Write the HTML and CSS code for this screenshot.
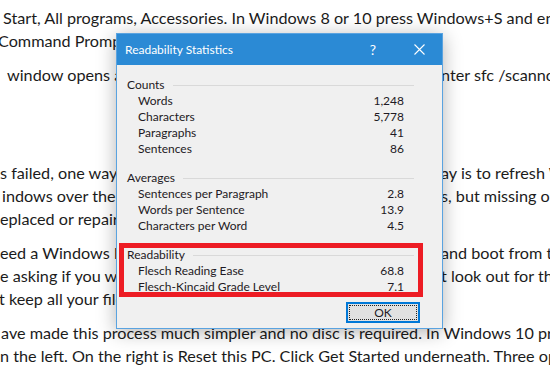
FILE: index.html
```html
<!DOCTYPE html>
<html lang="en">
<head>
    <meta charset="UTF-8">
    <meta name="viewport" content="width=device-width, initial-scale=1.0">
    <title>Readability Statistics</title>
    <link rel="stylesheet" href="styles.css">
</head>
<body>
    <div class="article">
        <div class="para">
            <div class="ln i3">Start, All programs, Accessories. In Windows 8 or 10 press Windows+S and enter cmd.</div>
            <div class="ln in2">Command Prompt and select Run as administrator.</div>
        </div>
        <div class="para gap">
            <div class="ln split i7"><span>window opens at the command prompt so click it and e</span><span>nter sfc /scannow</span></div>
        </div>
        <div class="para">
            <div class="ln split"><span>s failed, one way to repair the system files and its w</span><span>ay is to refresh Windows.</span></div>
            <div class="ln split i2"><span>indows over the top of the old one. Your programs, file</span><span>s, but missing or corrupt</span></div>
            <div class="ln"><span>eplaced or repaired.</span></div>
        </div>
        <div class="para">
            <div class="ln split"><span>eed a Windows DVD or USB flash drive, so insert it </span><span>and boot from the disc.</span></div>
            <div class="ln split"><span>e asking if you want to install Windows or upgrade, bu</span><span>t look out for the option</span></div>
            <div class="ln in1">t keep all your files and programs as they are.</div>
        </div>
        <div class="para">
            <div class="ln i1">ave made this process much simpler and no disc is required. In Windows 10 press</div>
            <div class="ln">n the left. On the right is Reset this PC. Click Get Started underneath. Three options</div>
        </div>
    </div>

    <div class="dialog">
        <div class="titlebar">
            <span class="title">Readability Statistics</span>
            <span class="tb-btn">?</span>
            <span class="tb-btn">
                <svg width="11" height="11" viewBox="0 0 11 11">
                    <path d="M0.5 0.5 L10.5 10.5 M10.5 0.5 L0.5 10.5" stroke="#fff" stroke-width="1.1" fill="none"/>
                </svg>
            </span>
        </div>
        <div class="dlg-body">
            <div class="group">
                <div class="group-head"><span>Counts</span><i></i></div>
                <div class="row"><span>Words</span><span>1,248</span></div>
                <div class="row"><span>Characters</span><span>5,778</span></div>
                <div class="row"><span>Paragraphs</span><span>41</span></div>
                <div class="row"><span>Sentences</span><span>86</span></div>
            </div>
            <div class="group">
                <div class="group-head"><span>Averages</span><i></i></div>
                <div class="row"><span>Sentences per Paragraph</span><span>2.8</span></div>
                <div class="row"><span>Words per Sentence</span><span>13.9</span></div>
                <div class="row"><span>Characters per Word</span><span>4.5</span></div>
            </div>
            <div class="group">
                <div class="group-head"><span>Readability</span><i></i></div>
                <div class="row"><span>Flesch Reading Ease</span><span>68.8</span></div>
                <div class="row"><span>Flesch-Kincaid Grade Level</span><span>7.1</span></div>
            </div>
            <div class="buttons">
                <button class="ok"><span>OK</span></button>
            </div>
        </div>
        <div class="highlight"></div>
    </div>
</body>
</html>
```

FILE: styles.css
```css
body {
    margin: 0;
    width: 550px;
    height: 374px;
    overflow: hidden;
    position: relative;
    background: #fff;
    color: #1b1b1b;
    font-family: Lato, "Liberation Sans", sans-serif;
    font-size: 16.2px;
}
.article {
    padding-top: 6px;
}
.para {
    margin-bottom: 11px;
}
.para.gap {
    margin-bottom: 75px;
}
.ln {
    height: 23px;
    line-height: 23px;
    white-space: nowrap;
    overflow: hidden;
}
.ln.split {
    display: grid;
    grid-template-columns: 441px max-content;
}
.ln.split > span:first-child {
    overflow: hidden;
}
.ln.split > span + span {
    text-indent: 0;
}
.i1 { text-indent: 1px; }
.i2 { text-indent: 2px; }
.i3 { text-indent: 3px; }
.i7 { text-indent: 7px; }
.in1 { text-indent: -1px; }
.in2 { text-indent: -2px; }

/* dialog window */
.dialog {
    position: absolute;
    left: 116px;
    top: 33px;
    width: 327px;
    box-sizing: border-box;
    border: 1px solid #5aa3e0;
    background: #f0f0f0;
    box-shadow: 0 3px 18px rgba(0, 0, 0, 0.3);
    font-family: Lato, "Noto Sans", sans-serif;
    font-size: 12px;
    color: #1e1a24;
}
.titlebar {
    display: flex;
    align-items: center;
    height: 31px;
    background: #2b8ad5;
    color: #fff;
}
.title {
    flex: 1;
    padding-left: 8px;
    font-size: 12px;
}
.tb-btn {
    width: 46px;
    height: 31px;
    display: flex;
    align-items: center;
    justify-content: center;
    font-size: 14px;
}
.dlg-body {
    padding: 12px 0 5px 10px;
}
.group {
    margin-right: 28px;
    margin-bottom: 13px;
}
.group-head {
    display: flex;
    align-items: center;
    height: 16px;
    line-height: 16px;
}
.group-head i {
    flex: 1;
    height: 1px;
    margin-left: 8px;
    background: #d9d9d9;
}
.row {
    display: flex;
    justify-content: space-between;
    height: 16px;
    line-height: 16px;
    padding: 0 10px 0 11px;
}
.buttons {
    display: flex;
    justify-content: flex-end;
    padding-right: 22px;
    margin-top: -6px;
}
.ok {
    width: 74px;
    height: 21px;
    padding: 1px;
    border: 2px solid #0078d7;
    background: #e1e1e1;
    font-family: inherit;
    font-size: 12px;
    color: #1e1a24;
}
.ok span {
    display: flex;
    align-items: center;
    justify-content: center;
    height: 100%;
    box-sizing: border-box;
    border: 1px dotted #222;
}
.highlight {
    position: absolute;
    left: 2px;
    top: 209px;
    width: 304px;
    height: 54px;
    box-sizing: border-box;
    border: 5px solid #ed1c24;
}
```
